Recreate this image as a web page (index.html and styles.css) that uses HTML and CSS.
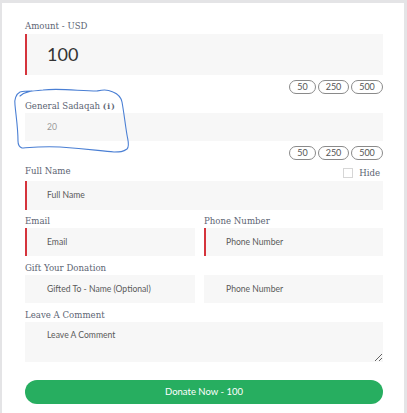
FILE: index.html
```html
<!DOCTYPE html>
<html>
<head>
<meta charset="utf-8">
<link rel="stylesheet" href="styles.css">
</head>
<body>
<div class="card">
  <div class="label">Amount - USD</div>
  <div class="input big req">100</div>
  <div class="presets"><span class="pill p50">50</span><span class="pill p250">250</span><span class="pill p500">500</span></div>

  <div class="label sadaqah">General Sadaqah <span class="info">(i)</span></div>
  <div class="input small">20</div>
  <div class="presets"><span class="pill p50">50</span><span class="pill p250">250</span><span class="pill p500">500</span></div>

  <div class="name-row">
    <div class="label">Full Name</div>
    <div class="hide"><span class="box"></span><span class="label">Hide</span></div>
  </div>
  <div class="input req ph">Full Name</div>

  <div class="grid2 row">
    <div>
      <div class="label">Email</div>
      <div class="input req ph">Email</div>
    </div>
    <div>
      <div class="label">Phone Number</div>
      <div class="input req ph">Phone Number</div>
    </div>
  </div>

  <div class="row">
    <div class="label">Gift Your Donation</div>
    <div class="grid2">
      <div class="input ph">Gifted To - Name (Optional)</div>
      <div class="input ph">Phone Number</div>
    </div>
  </div>

  <div class="row">
    <div class="label">Leave A Comment</div>
    <textarea class="comment" placeholder="Leave A Comment"></textarea>
  </div>

  <div class="donate">Donate Now - 100</div>

  <svg class="scribble" width="140" height="70" viewBox="0 0 140 70">
    <path d="M20 13 C 24 9, 30 8, 43 7 C 60 5, 80 8, 97 8 C 102 7, 106 6, 113 9 C 118 11, 121 14, 122 19 C 124 30, 125 40, 127 52 C 128 58, 130 63, 127 66 C 123 69, 120 69, 114 69 C 100 68, 90 66, 60 64 C 45 63, 35 64, 22 65 C 19 64, 18 62, 18 58 C 18 45, 16 33, 15 22 C 14 17, 16 11, 20 9 C 24 8, 28 8, 32 8" fill="none" stroke="#4a7fd4" stroke-width="1.1" stroke-linecap="round"/>
  </svg>
</div>
</body>
</html>
```
FILE: styles.css
```css
html, body {
  margin: 0;
  padding: 0;
}
body {
  background: #e4e4e6;
  width: 407px;
  height: 413px;
  overflow: hidden;
}
.card {
  position: relative;
  background: #ffffff;
  margin: 3px 0 0 2px;
  width: 402px;
  height: 410px;
  padding: 17px 21px 0 23px;
  box-sizing: border-box;
}
.label {
  font-family: "DejaVu Serif", serif;
  font-size: 8.6px;
  line-height: 12px;
  color: #5c6473;
  white-space: nowrap;
}
.info {
  letter-spacing: 1px;
  font-weight: bold;
  font-size: 7.5px;
}
.input {
  background: #f7f7f7;
  font-family: Lato, "Open Sans", sans-serif;
  font-size: 8.6px;
  color: #5a5a5a;
  height: 28px;
  line-height: 28px;
  padding-left: 22px;
  box-sizing: border-box;
  white-space: nowrap;
}
.input.req {
  border-left: 2px solid #d5343c;
  padding-left: 20px;
}
.input.big {
  margin-top: 2px;
  height: 41px;
  line-height: 41px;
  font-size: 18px;
  color: #333;
}
.input.small {
  color: #999;
}
.presets {
  display: flex;
  justify-content: flex-end;
  gap: 2px;
  margin-top: 5px;
  height: 14px;
}
.pill {
  border: 1px solid #8a8a8a;
  border-radius: 7px;
  font-family: Lato, "Open Sans", sans-serif;
  font-size: 9px;
  color: #555;
  height: 14px;
  line-height: 12px;
  box-sizing: border-box;
  text-align: center;
}
.p50 { width: 27px; }
.p250 { width: 31px; }
.p500 { width: 32px; }
.sadaqah {
  margin-top: 6px;
}
.name-row {
  display: flex;
  justify-content: space-between;
  margin-top: 5px;
  height: 16px;
}
.name-row + .input {
  height: 29px;
  line-height: 29px;
}
.hide {
  display: flex;
  align-items: center;
  gap: 6px;
  margin-top: 3px;
  height: 10px;
  padding-right: 3px;
}
.box {
  width: 10px;
  height: 10px;
  border: 1px solid #d6d6d6;
  box-sizing: border-box;
  background: #fff;
}
.row {
  margin-top: 5px;
}
.row .label {
  margin-bottom: 1px;
}
.row + .row {
  margin-top: 6px;
}
.grid2 {
  display: grid;
  grid-template-columns: 170px 179px;
  column-gap: 9px;
}
.comment {
  display: block;
  width: 358px;
  height: 40px;
  box-sizing: border-box;
  background: #f7f7f7;
  border: none;
  outline: none;
  resize: vertical;
  padding: 8px 22px;
  font-family: Lato, "Open Sans", sans-serif;
  font-size: 8.6px;
  color: #5a5a5a;
  margin: 0;
}
.comment::placeholder {
  color: #5a5a5a;
  opacity: 1;
}
.donate {
  margin-top: 18px;
  height: 24px;
  line-height: 24px;
  border-radius: 12px;
  background: #27ae60;
  color: #fff;
  text-align: center;
  font-family: Lato, "Open Sans", sans-serif;
  font-size: 9.5px;
}
.scribble {
  position: absolute;
  left: -2px;
  top: 80px;
  pointer-events: none;
}
```
